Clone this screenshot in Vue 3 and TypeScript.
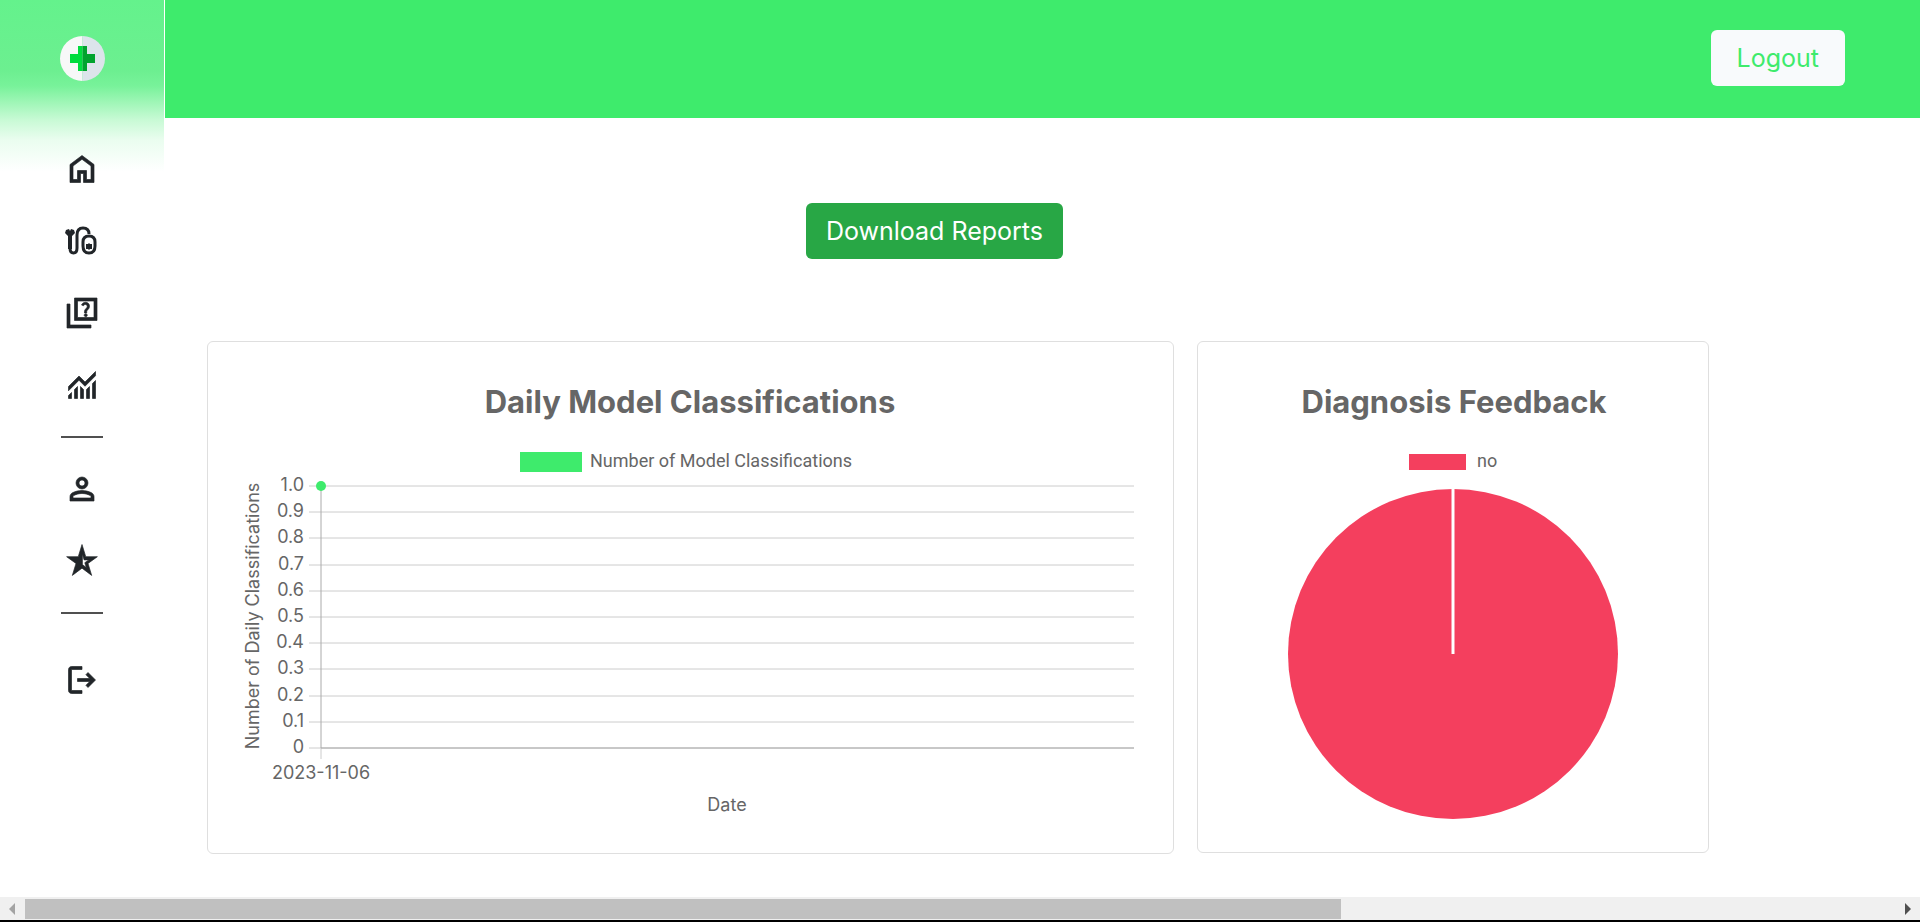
<script setup lang="ts">
interface NavItem {
  label: string
  path: string
}

const mainNav: NavItem[] = [
  {
    label: 'Home',
    path: 'M240-200h120v-240h240v240h120v-360L480-740 240-560v360Zm-80 80v-480l320-240 320 240v480H520v-240h-80v240H160Z',
  },
  { label: 'Diagnosis', path: '' },
  {
    label: 'Questions',
    path: 'M280-320v-560h600v600H280v-40Zm80-40h440v-440H360v440ZM80-80v-640h80v560h560v80H80Zm466-400h60v-40q0-20 24-42 50-44 50-98 0-50-32-78t-78-28q-72 0-104 70l54 22q14-36 50-36 50 0 50 50 0 30-32 60-42 38-42 80v40Zm34 100q17 0 29-12t12-29q0-17-12-29t-29-12q-17 0-29 12t-12 29q0 17 12 29t29 12Z',
  },
  {
    label: 'Statistics',
    path: 'M120-120v-80l80-80v160h-80Zm160 0v-240l80-80v320h-80Zm160 0v-320l80 81v239h-80Zm160 0v-239l80-80v319h-80Zm160 0v-400l80-80v480h-80ZM120-327v-113l280-280 160 160 280-280v113L560-447 400-607 120-327Z',
  },
]

const userNav: NavItem[] = [
  {
    label: 'Profile',
    path: 'M480-480q-66 0-113-47t-47-113q0-66 47-113t113-47q66 0 113 47t47 113q0 66-47 113t-113 47ZM160-160v-112q0-34 17.5-62.5T224-378q62-31 126-46.5T480-440q66 0 130 15.5T736-378q29 15 46.5 43.5T800-272v112H160Zm80-80h480v-32q0-11-5.5-20T700-306q-54-27-109-40.5T480-360q-56 0-111 13.5T260-306q-9 5-14.5 14t-5.5 20v32Zm240-320q33 0 56.5-23.5T560-640q0-33-23.5-56.5T480-720q-33 0-56.5 23.5T400-640q0 33 23.5 56.5T480-560Z',
  },
  {
    label: 'Ratings',
    path: 'M490-670v285l105 80-40-130 105-75H535ZM222-95l98-320L70-595h310l100-325 100 325h310L640-415l98 320-258-195-258 195Z',
  },
]

const exitPath =
  'M200-120q-33 0-56.5-23.5T120-200v-560q0-33 23.5-56.5T200-840h280v80H200v560h280v80H200Zm440-160-55-58 102-102H360v-80h327L585-622l55-58 200 200-200 200Z'

const ticks = ['1.0', '0.9', '0.8', '0.7', '0.6', '0.5', '0.4', '0.3', '0.2', '0.1', '0']
const tickY = (i: number): number => Math.round(144 + (i * 262) / 10)
</script>

<template>
  <div class="page">
    <div class="layout">
      <aside class="sidebar">
        <a href="#" class="brand" aria-label="Dashboard">
          <svg viewBox="0 0 45 45" aria-hidden="true">
            <path d="M22.500 0a22.500 22.500 0 0 0 0 45z" fill="#f7f8f8" />
            <path d="M22.500 0a22.500 22.500 0 0 1 0 45z" fill="#dce4eb" />
            <path d="M18 10h4.500v25H18v-8h-8v-9h8z" fill="#00dc3e" />
            <path d="M22.500 10H27v8h8v9h-8v8h-4.500z" fill="#00a32e" />
          </svg>
        </a>
        <nav class="nav">
          <a v-for="item in mainNav" :key="item.label" href="#" :aria-label="item.label">
            <svg v-if="item.path" class="bold" viewBox="0 -960 960 960" aria-hidden="true"><path :d="item.path" /></svg>
            <svg v-else viewBox="0 0 36 36" aria-hidden="true">
              <path d="M1 10l1-3 3-1 1 2 1-2 3 1 1 3-3 3v13H4V13z" />
              <path
                d="M6 12v13q0 5 3.500 5t3.500-5V12q0-7 6-7t6 6M19 19q0-6 6-6t6 6v4q0 7-6 7t-6-7z"
                fill="none"
                stroke="currentColor"
                stroke-width="3"
              />
              <path d="M25 20l1 1h2v5h-2l-1 1-1-1h-2v-5h2z" />
            </svg>
          </a>
        </nav>
        <hr />
        <nav class="nav">
          <a v-for="item in userNav" :key="item.label" href="#" :aria-label="item.label">
            <svg class="bold" viewBox="0 -960 960 960" aria-hidden="true"><path :d="item.path" /></svg>
          </a>
        </nav>
        <hr />
        <a href="#" class="exit" aria-label="Sign out">
          <svg class="bold" viewBox="0 -960 960 960" aria-hidden="true"><path :d="exitPath" /></svg>
        </a>
      </aside>

      <div class="content">
        <header class="topbar">
          <button type="button" class="logout">Logout</button>
        </header>
        <main>
          <div class="actions">
            <button type="button" class="download">Download Reports</button>
          </div>
          <div class="charts">
            <section class="card">
              <svg viewBox="0 0 965 511" role="img" aria-label="Daily Model Classifications">
                <text class="title" x="482" y="71">Daily Model Classifications</text>
                <rect x="312" y="110" width="62" height="20" fill="#3eeb6c" />
                <text class="legend" x="382" y="125">Number of Model Classifications</text>
                <g v-for="(t, i) in ticks" :key="t">
                  <line class="grid" x1="101" x2="926" :y1="tickY(i)" :y2="tickY(i)" />
                  <text class="tick end" x="96" :y="tickY(i) + 5">{{ t }}</text>
                </g>
                <line class="grid" x1="113" x2="113" y1="406" y2="417" />
                <path class="axis" d="M113 144V406H926" />
                <circle cx="113" cy="144" r="5" fill="#3eeb6c" />
                <text class="tick mid" x="113" y="437">2023-11-06</text>
                <text class="tick mid" x="519" y="469">Date</text>
                <text class="tick mid" transform="translate(51 274) rotate(-90)">Number of Daily Classifications</text>
              </svg>
            </section>
            <section class="card">
              <svg viewBox="0 0 510 510" role="img" aria-label="Diagnosis Feedback">
                <text class="title" x="256" y="71">Diagnosis Feedback</text>
                <rect x="211" y="112" width="57" height="16" fill="#f43f5e" />
                <text class="legend" x="279" y="125">no</text>
                <circle cx="255" cy="312" r="165" fill="#f43f5e" />
                <path d="M255 146V312" stroke="#fff" stroke-width="3" />
              </svg>
            </section>
          </div>
        </main>
      </div>
    </div>

    <div class="scroll" aria-hidden="true">
      <svg class="arrow" viewBox="0 0 25 23"><path d="M15 6v12l-6-6z" fill="#a3a3a3" /></svg>
      <div class="track"><div class="thumb"></div></div>
      <svg class="arrow" viewBox="0 0 25 23"><path d="M10 6v12l6-6z" fill="#505050" /></svg>
    </div>
  </div>
</template>

<style>
body {
  margin: 0;
  background: #fff;
}
</style>

<style scoped>
.page {
  min-height: 100vh;
  display: flex;
  flex-direction: column;
  font-family: Inter, "Open Sans", sans-serif;
  color: #212529;
}
.layout {
  flex: 1;
  display: flex;
}
.sidebar {
  width: 164px;
  flex: none;
  display: flex;
  flex-direction: column;
  align-items: center;
  padding-top: 36px;
  box-sizing: border-box;
  background: linear-gradient(#64f28c 0, #6cef90 70px, #78f29a 86px, #9ef6b6 102px, #c8fad5 120px, #eafdef 140px, #fff 172px);
}
.sidebar a {
  color: #212529;
  display: block;
}
.sidebar svg {
  display: block;
  width: 36px;
  height: 36px;
  fill: currentColor;
}
.sidebar .bold {
  stroke: currentColor;
  stroke-width: 18px;
}
.sidebar .brand svg {
  width: 45px;
  height: 45px;
}
.brand {
  margin-bottom: 70px;
}
.nav {
  display: flex;
  flex-direction: column;
  gap: 36px;
}
.sidebar hr {
  width: 42px;
  height: 2px;
  margin: 33px 0;
  border: 0;
  background: #505050;
}
.exit {
  margin-top: 15px;
}
.content {
  flex: 1;
  min-width: 0;
}
.topbar {
  height: 118px;
  box-sizing: border-box;
  display: flex;
  align-items: center;
  justify-content: flex-end;
  padding: 0 75px 2px 0;
  border-left: 1px solid #fff;
  background: #3eeb6c;
}
button {
  font-family: inherit;
  font-size: 25px;
  line-height: 36px;
  height: 56px;
  border: 0;
  border-radius: 6px;
  cursor: pointer;
}
.logout {
  padding: 0 26px;
  background: #f8fafc;
  color: #3eeb6c;
}
.download {
  padding: 0 20px;
  background: #28a745;
  color: #fff;
}
.actions {
  display: flex;
  justify-content: center;
  padding: 85px 216px 82px 1px;
}
.charts {
  display: grid;
  grid-template-columns: 967fr 512fr;
  gap: 23px;
  align-items: start;
  padding: 0 211px 43px 43px;
}
.card {
  border: 1px solid #dfdfdf;
  border-radius: 6px;
}
.card svg {
  display: block;
  width: 100%;
}
.card text {
  fill: #666;
}
.title {
  font-size: 31px;
  font-weight: 700;
  text-anchor: middle;
}
.legend {
  font-family: Roboto, sans-serif;
  font-size: 18px;
}
.tick {
  font-size: 18px;
}
.mid {
  text-anchor: middle;
}
.end {
  text-anchor: end;
}
.grid {
  stroke: #ccc;
}
.axis {
  fill: none;
  stroke: #aaa;
}
.scroll {
  display: flex;
  height: 23px;
  background: #f0f0f0;
  border-bottom: 2px solid #000;
}
.arrow {
  width: 25px;
  height: 23px;
  flex: none;
}
.track {
  flex: 1;
  padding: 2px 0 1px;
}
.thumb {
  width: 70.4%;
  height: 20px;
  background: #c0c0c0;
}
</style>
